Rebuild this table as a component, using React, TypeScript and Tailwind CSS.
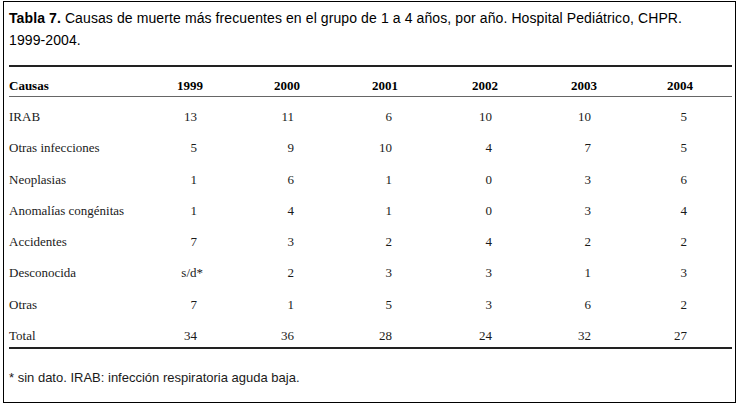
import React from 'react';

const years = ['1999', '2000', '2001', '2002', '2003', '2004'];
const widths = ['w-[98px]', 'w-[97px]', 'w-[98px]', 'w-[100px]', 'w-[99px]', 'w-[96px]'];

const rows: [string, string[]][] = [
  ['IRAB', ['13', '11', '6', '10', '10', '5']],
  ['Otras infecciones', ['5', '9', '10', '4', '7', '5']],
  ['Neoplasias', ['1', '6', '1', '0', '3', '6']],
  ['Anomalías congénitas', ['1', '4', '1', '0', '3', '4']],
  ['Accidentes', ['7', '3', '2', '4', '2', '2']],
  ['Desconocida', ['s/d*', '2', '3', '3', '1', '3']],
  ['Otras', ['7', '1', '5', '3', '6', '2']],
  ['Total', ['34', '36', '28', '24', '32', '27']],
];

const App = () => {
  return (
    <div className="w-[741px] h-[408px] bg-white pl-[3px] pt-[1px]">
      <div className="w-[733px] h-[402px] border border-black px-[5px] flex flex-col">
        {/* Caption */}
        <p className="mt-[5px] text-[14px] leading-[22px] tracking-[0.1px] text-black font-['Liberation_Sans',Arial,sans-serif]">
          <span className="font-bold">Tabla 7.</span> Causas de muerte más frecuentes en el grupo de 1 a 4 años, por año. Hospital Pediátrico, CHPR.{' '}
          <span className="whitespace-nowrap">1999-2004.</span>
        </p>

        {/* Table */}
        <table className="mt-[14px] w-[723px] table-fixed border-separate border-spacing-0 font-['Liberation_Serif','Times_New_Roman',serif] text-[13px] leading-[16px] text-[#1a1a1a]">
          <thead>
            <tr className="font-bold text-black">
              <th className="w-[96px] text-left font-bold border-t-2 border-t-[#222] border-b border-b-[#666] pt-[11px] pb-[2px] p-0">
                Causas
              </th>
              {years.map((y, i) => (
                <th key={y} className={`${widths[i]} text-right font-bold border-t-2 border-t-[#222] border-b border-b-[#666] pt-[11px] pb-[2px]`}>
                  {y}
                </th>
              ))}
              <th className="border-t-2 border-t-[#222] border-b border-b-[#666]" />
            </tr>
          </thead>
          <tbody>
            {rows.map(([name, vals], r) => {
              const last = r === rows.length - 1;
              const cell = `pt-[12px] ${last ? 'pb-[3px] border-b-2 border-b-[#222]' : 'pb-[3.3px]'}`;
              return (
                <tr key={name}>
                  <td className={`${cell} whitespace-nowrap`}>{name}</td>
                  {vals.map((v, i) => (
                    <td key={i} className={`${cell} text-right ${v === 's/d*' ? 'pr-0' : 'pr-[6px]'}`}>
                      {v}
                    </td>
                  ))}
                  <td className={cell} />
                </tr>
              );
            })}
          </tbody>
        </table>

        {/* Footnote */}
        <p className="mt-[21px] text-[13px] leading-[16px] text-[#1a1a1a] font-['Liberation_Sans',Arial,sans-serif]">
          * sin dato. IRAB: infección respiratoria aguda baja.
        </p>
      </div>
    </div>
  );
};

export default App;
